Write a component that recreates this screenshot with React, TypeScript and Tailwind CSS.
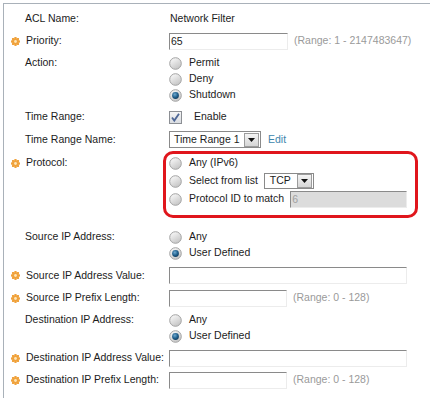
import React from "react";

const Gear = () => (
  <svg width="9" height="9" viewBox="0 0 9 9" className="shrink-0">
    {[0, 45, 90, 135, 180, 225, 270, 315].map((a) => (
      <rect
        key={a}
        x="3.6"
        y="0"
        width="1.8"
        height="9"
        rx="0.6"
        fill="#f0a23c"
        transform={`rotate(${a} 4.5 4.5)`}
      />
    ))}
    <circle cx="4.5" cy="4.5" r="3.2" fill="#f0a23c" />
    <circle cx="4.5" cy="4.5" r="1.4" fill="#fde6b8" />
  </svg>
);

const Radio = ({ on = false }: { on?: boolean }) => (
  <svg width="13" height="13" viewBox="0 0 13 13" className="shrink-0">
    <defs>
      <linearGradient id="rg" x1="0" y1="0" x2="0.6" y2="1">
        <stop offset="0" stopColor="#ffffff" />
        <stop offset="1" stopColor="#c6c6c6" />
      </linearGradient>
      <radialGradient id="rb" cx="0.4" cy="0.35" r="0.7">
        <stop offset="0" stopColor="#6fa9cf" />
        <stop offset="0.6" stopColor="#1f5f8c" />
        <stop offset="1" stopColor="#123a5a" />
      </radialGradient>
    </defs>
    <circle cx="6.5" cy="6.5" r="5.8" fill="url(#rg)" stroke="#a3a3a3" strokeWidth="1" />
    {on && <circle cx="6.5" cy="6.5" r="3.4" fill="url(#rb)" />}
  </svg>
);

const Check = () => (
  <svg width="13" height="13" viewBox="0 0 13 13" className="shrink-0">
    <defs>
      <linearGradient id="cg" x1="0" y1="0" x2="0" y2="1">
        <stop offset="0" stopColor="#f6f6f6" />
        <stop offset="1" stopColor="#d8dbe0" />
      </linearGradient>
    </defs>
    <rect x="0.5" y="0.5" width="12" height="12" fill="url(#cg)" stroke="#8c8f94" />
    <path d="M3 6.5 L5.3 9.6 L10 2.8" fill="none" stroke="#4e6796" strokeWidth="1.8" />
  </svg>
);

const Arrow = () => (
  <div className="flex h-[14px] w-[15px] items-center justify-center border border-[#9c9c9c] bg-[linear-gradient(#f4f4f4,#d6d6d6)]">
    <svg width="7" height="4" viewBox="0 0 7 4">
      <path d="M0 0 H7 L3.5 4 Z" fill="#111" />
    </svg>
  </div>
);

const Field = ({ w, value = "", off = false }: { w: string; value?: string; off?: boolean }) => (
  <div
    className={`h-[17px] ${w} border border-t-[#8a8a8a] border-l-[#8a8a8a] border-r-[#ececec] border-b-[#ececec] pl-[1px] leading-[15px] ${
      off ? "bg-[#dcdcdc] text-[#a0a0a0]" : "bg-white"
    }`}
  >
    {value}
  </div>
);

const Range = ({ t }: { t: string }) => <span className="ml-[6px] text-[#9a9a9a]">{t}</span>;

const Label = ({ text, req = false, h = "h-full" }: { text: string; req?: boolean; h?: string }) => (
  <div className={`flex w-[165px] shrink-0 items-center gap-[6px] ${h} ${req ? "pl-[7px]" : "pl-[21px]"}`}>
    {req && <Gear />}
    <span>{text}</span>
  </div>
);

const Opt = ({ on = false, text, h = "h-[16px]", children }: { on?: boolean; text: string; h?: string; children?: React.ReactNode }) => (
  <div className={`flex items-center ${h}`}>
    <Radio on={on} />
    <span className="ml-[7px]">{text}</span>
    {children}
  </div>
);

export default function App() {
  return (
    <div className="h-[398px] w-[430px] overflow-hidden bg-white pl-[3px] pt-[3px] font-['Liberation_Sans',Arial,sans-serif] text-[10.5px] text-[#1c1c1c]">
      <div className="h-full border-l border-t border-[#a9b1b9] pt-[3px]">
        <div className="flex h-[23px] items-center">
          <Label text="ACL Name:" />
          <span className="ml-[1px]">Network Filter</span>
        </div>
        <div className="flex h-[22px] items-center">
          <Label text="Priority:" req />
          <Field w="w-[119px]" value="65" />
          <Range t="(Range: 1 - 2147483647)" />
        </div>
        <div className="mt-[3px] flex">
          <Label text="Action:" h="h-[16px]" />
          <div className="flex flex-col">
            <Opt text="Permit" />
            <Opt text="Deny" />
            <Opt text="Shutdown" on />
          </div>
        </div>
        <div className="mt-[3px] flex h-[22px] items-center">
          <Label text="Time Range:" />
          <Check />
          <span className="ml-[12px]">Enable</span>
        </div>
        <div className="flex h-[23px] items-center">
          <Label text="Time Range Name:" />
          <div className="flex h-[17px] w-[92px] items-center justify-between border border-[#8a8a8a] bg-white pl-[4px] pr-[1px]">
            <span>Time Range 1</span>
            <Arrow />
          </div>
          <span className="ml-[7px] text-[#3d86ad]">Edit</span>
        </div>
        <div className="flex">
          <Label text="Protocol:" req h="mt-[3px] h-[18px]" />
          <div className="-ml-[6px] h-[67px] w-[255px] rounded-[10px] border-[3px] border-[#e0161c] pl-[3px]">
            <Opt text="Any (IPv6)" h="h-[18px]" />
            <Opt text="Select from list" h="h-[18px]">
              <div className="ml-[6px] flex h-[16px] w-[50px] items-center justify-between border border-[#8a8a8a] bg-white pl-[5px] pr-[1px]">
                <span>TCP</span>
                <Arrow />
              </div>
            </Opt>
            <Opt text="Protocol ID to match" h="h-[18px]">
              <div className="ml-[6px]">
                <Field w="w-[117px]" value="6" off />
              </div>
            </Opt>
          </div>
        </div>
        <div className="mt-[11px] flex">
          <Label text="Source IP Address:" h="h-[16px]" />
          <div className="flex flex-col">
            <Opt text="Any" />
            <Opt text="User Defined" on />
          </div>
        </div>
        <div className="mt-[3px] flex h-[23px] items-center">
          <Label text="Source IP Address Value:" req />
          <Field w="w-[238px]" />
        </div>
        <div className="flex h-[22px] items-center">
          <Label text="Source IP Prefix Length:" req />
          <Field w="w-[118px]" />
          <Range t="(Range: 0 - 128)" />
        </div>
        <div className="mt-[3px] flex">
          <Label text="Destination IP Address:" h="h-[16px]" />
          <div className="flex flex-col">
            <Opt text="Any" />
            <Opt text="User Defined" on />
          </div>
        </div>
        <div className="mt-[3px] flex h-[22px] items-center">
          <Label text="Destination IP Address Value:" req />
          <Field w="w-[238px]" />
        </div>
        <div className="flex h-[22px] items-center">
          <Label text="Destination IP Prefix Length:" req />
          <Field w="w-[118px]" />
          <Range t="(Range: 0 - 128)" />
        </div>
      </div>
    </div>
  );
}
